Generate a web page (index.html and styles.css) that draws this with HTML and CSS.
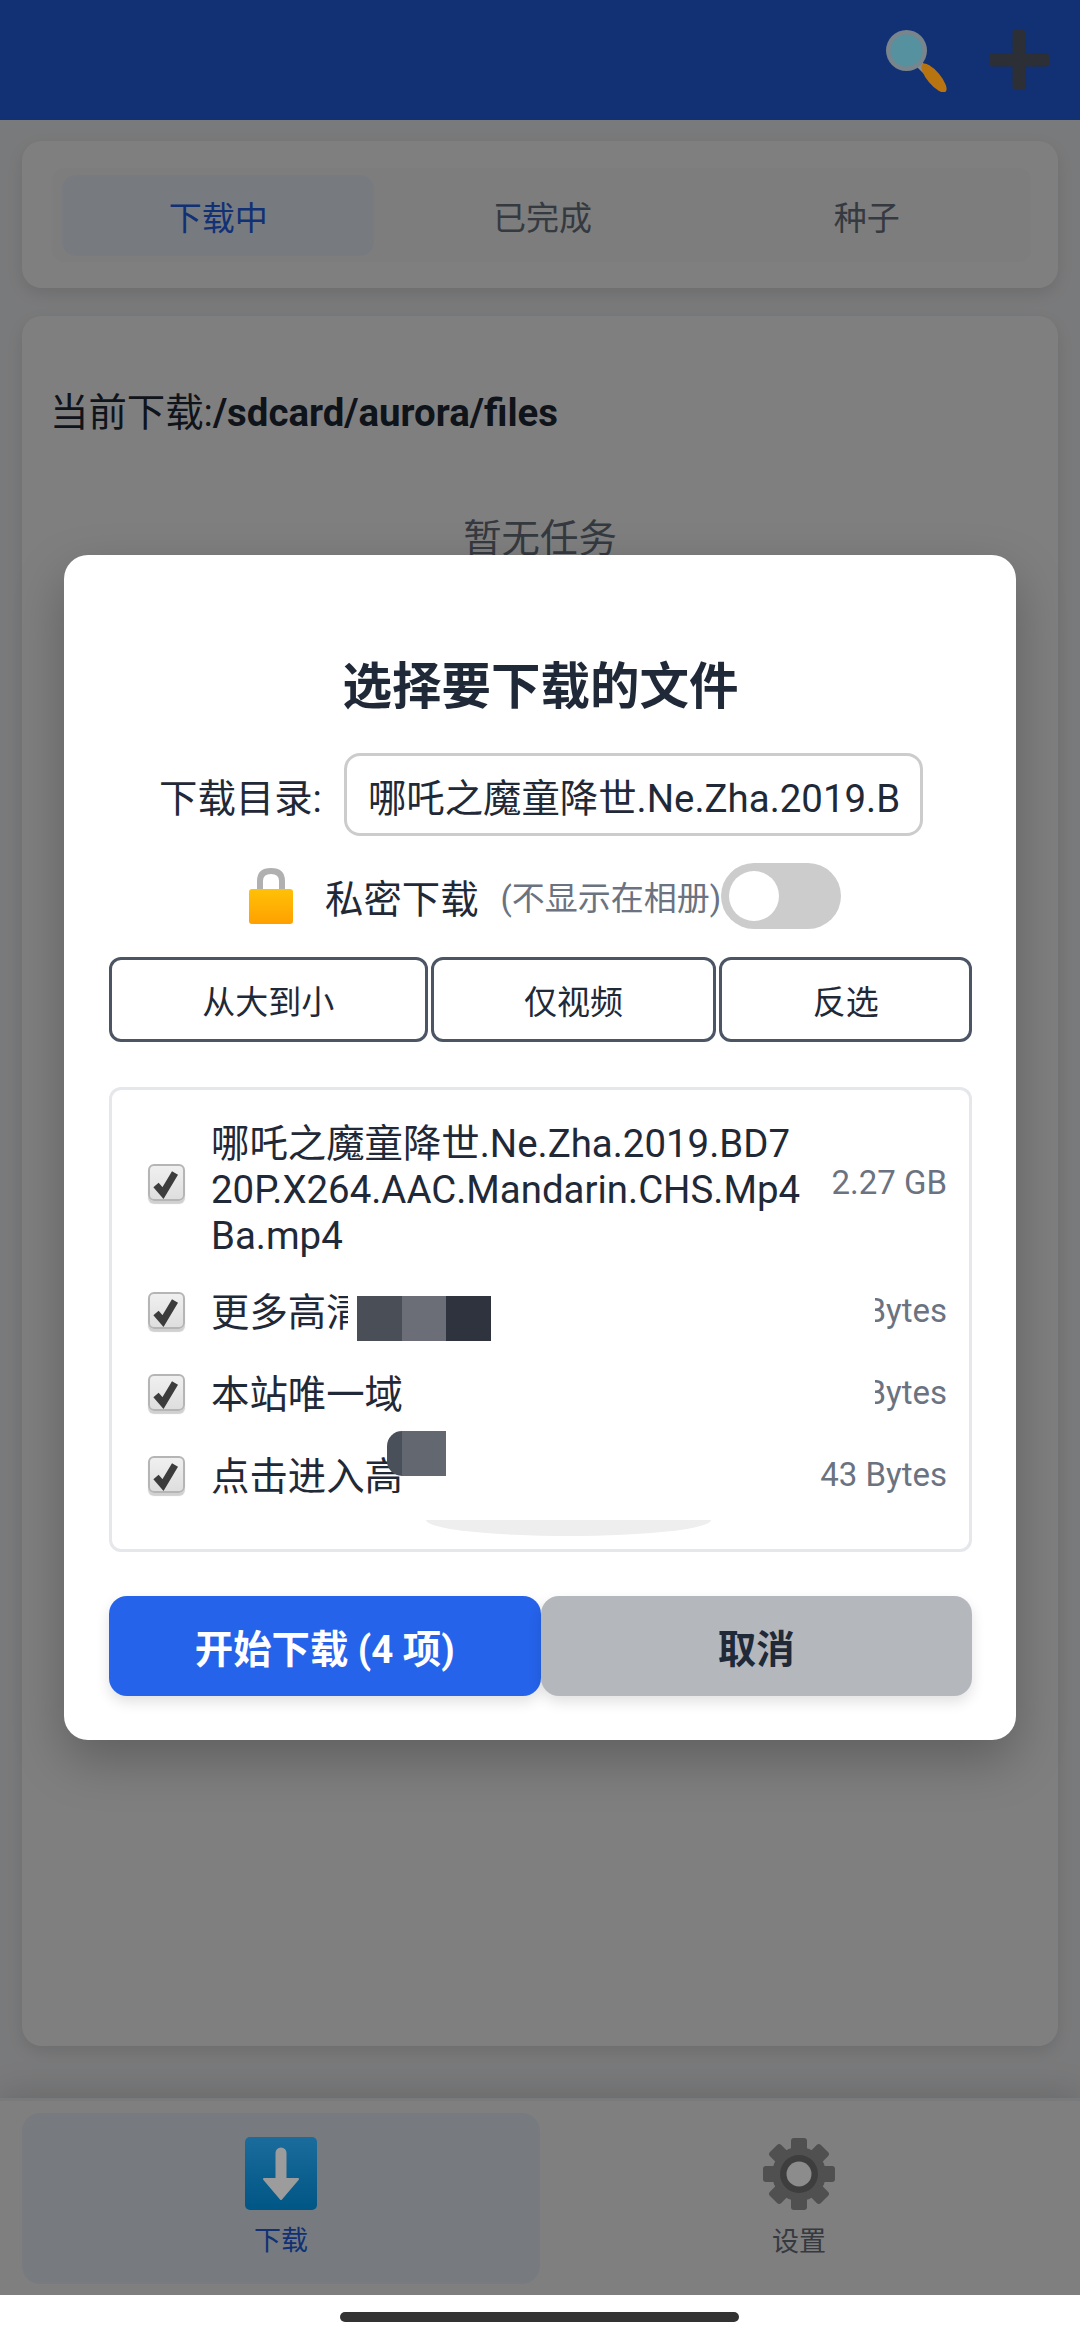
FILE: index.html
```html
<!DOCTYPE html>
<html lang="zh-CN">
<head>
<meta charset="utf-8">
<title>下载</title>
<link rel="stylesheet" href="styles.css">
</head>
<body>
<div class="app">
  <header class="topbar">
    <svg class="raised" viewBox="0 0 62 62" width="62" height="62">
      <path d="M33 34 L41 42" stroke="#8a8d90" stroke-width="7"/>
      <ellipse cx="48" cy="48" rx="18" ry="6.5" transform="rotate(50 48 48)" fill="#b87410"/>
      <circle cx="20.5" cy="20.5" r="20.5" fill="#78858c"/>
      <circle cx="20.5" cy="20.5" r="16" fill="#56919f"/>
    </svg>
    <svg class="raised" viewBox="0 0 60 60" width="60" height="60">
      <path d="M30 4 V56 M4 30 H56" stroke="#2c2f35" stroke-width="13" stroke-linecap="round"/>
    </svg>
  </header>

  <section class="card tabs-card">
    <div class="tabs">
      <div class="tab active">下载中</div>
      <div class="tab">已完成</div>
      <div class="tab">种子</div>
    </div>
  </section>

  <section class="card main-card">
    <div class="path"><span>当前下载:</span><b>/sdcard/aurora/files</b></div>
    <div class="empty">暂无任务</div>
  </section>

  <nav class="bottomnav">
    <div class="navitem active">
      <svg class="raised" viewBox="0 0 72 73" width="72" height="73">
        <defs><linearGradient id="dl" x1="0" y1="0" x2="0" y2="1"><stop offset="0" stop-color="#1a6c9c"/><stop offset="1" stop-color="#005685"/></linearGradient></defs>
        <rect width="72" height="73" rx="5" fill="url(#dl)"/>
        <path d="M36 16 V42" stroke="#9c9c9c" stroke-width="11" stroke-linecap="round"/>
        <path d="M19 42 H53 L36 62 Z" fill="#9c9c9c" stroke="#9c9c9c" stroke-width="2" stroke-linejoin="round"/>
      </svg>
      <span>下载</span>
    </div>
    <div class="navitem">
      <svg class="raised" viewBox="0 0 74 74" width="74" height="74">
        <g fill="#505050">
          <circle cx="37" cy="37" r="27"/>
          <rect x="29" y="1" width="16" height="14" rx="3"/>
          <rect x="29" y="59" width="16" height="14" rx="3"/>
          <rect x="29" y="1" width="16" height="14" rx="3" transform="rotate(45 37 37)"/>
          <rect x="29" y="59" width="16" height="14" rx="3" transform="rotate(45 37 37)"/>
          <rect x="29" y="1" width="16" height="14" rx="3" transform="rotate(90 37 37)"/>
          <rect x="29" y="59" width="16" height="14" rx="3" transform="rotate(90 37 37)"/>
          <rect x="29" y="1" width="16" height="14" rx="3" transform="rotate(135 37 37)"/>
          <rect x="29" y="59" width="16" height="14" rx="3" transform="rotate(135 37 37)"/>
        </g>
        <circle cx="37" cy="37" r="19" fill="#3e3e3e"/>
        <circle cx="37" cy="37" r="12.5" fill="#8c8c8c"/>
      </svg>
      <span>设置</span>
    </div>
  </nav>

  <div class="overlay">
    <div class="dialog">
      <h2 class="title">选择要下载的文件</h2>

      <div class="dir-row">
        <label class="dir-label">下载目录:</label>
        <div class="dir-input"><span>哪吒之魔童降世.Ne.Zha.2019.B</span></div>
      </div>

      <div class="private-row">
        <svg class="ico-lock" viewBox="0 0 44 56" width="44" height="56">
          <defs><linearGradient id="lk" x1="0" y1="0" x2="0" y2="1"><stop offset="0" stop-color="#ffc107"/><stop offset="1" stop-color="#ffa000"/></linearGradient></defs>
          <path d="M11 24 V13 C11 6 15 3 22 3 C29 3 33 6 33 13 V24" fill="none" stroke="#b0b0b0" stroke-width="6"/>
          <rect x="0" y="21" width="44" height="35" rx="3" fill="url(#lk)"/>
        </svg>
        <span class="private-label">私密下载</span>
        <span class="private-hint">(不显示在相册)</span>
        <span class="switch"><span class="knob"></span></span>
      </div>

      <div class="filters">
        <button class="filter">从大到小</button>
        <button class="filter">仅视频</button>
        <button class="filter">反选</button>
      </div>

      <div class="files">
        <div class="file">
          <span class="check"><svg viewBox="0 0 37 37" width="37" height="37"><path d="M8 21 L15 29 L27 9" fill="none" stroke="#3c3c3c" stroke-width="7"/></svg></span>
          <span class="fname long">哪吒之魔童降世.Ne.Zha.2019.BD720P.X264.AAC.Mandarin.CHS.Mp4Ba.mp4</span>
          <span class="fsize">2.27 GB</span>
        </div>
        <div class="file">
          <span class="check"><svg viewBox="0 0 37 37" width="37" height="37"><path d="M8 21 L15 29 L27 9" fill="none" stroke="#3c3c3c" stroke-width="7"/></svg></span>
          <span class="fname">更多高清</span>
          <span class="fsize">43 Bytes</span>
        </div>
        <div class="file">
          <span class="check"><svg viewBox="0 0 37 37" width="37" height="37"><path d="M8 21 L15 29 L27 9" fill="none" stroke="#3c3c3c" stroke-width="7"/></svg></span>
          <span class="fname">本站唯一域</span>
          <span class="fsize">43 Bytes</span>
        </div>
        <div class="file">
          <span class="check"><svg viewBox="0 0 37 37" width="37" height="37"><path d="M8 21 L15 29 L27 9" fill="none" stroke="#3c3c3c" stroke-width="7"/></svg></span>
          <span class="fname">点击进入高</span>
          <span class="fsize">43 Bytes</span>
        </div>
        <div class="mask mask-a"></div>
        <div class="mask mask-b"></div>
        <div class="patch patch-a"><i class="p1"></i><i class="p2"></i><i class="p3"></i></div>
        <div class="patch patch-b"><i class="p4"></i><i class="p5"></i></div>
        <div class="smudge"></div>
      </div>

      <div class="actions">
        <button class="btn primary">开始下载 (4 项)</button>
        <button class="btn cancel">取消</button>
      </div>
    </div>
  </div>
</div>
<div class="homebar"><span class="home-indicator"></span></div>
</body>
</html>
```

FILE: styles.css
```css
* { box-sizing: border-box; }
html, body { margin: 0; padding: 0; }
body {
  width: 1080px;
  height: 2340px;
  overflow: hidden;
  background: #fff;
  font-family: Roboto, "Noto Sans CJK SC", sans-serif;
  color: #1f2937;
}
.app {
  position: relative;
  height: 2295px;
  background: #f3f4f6;
  display: flex;
  flex-direction: column;
  overflow: hidden;
}
.raised { position: relative; z-index: 2; }
.topbar {
  height: 120px;
  flex: none;
  background: #2563eb;
  display: flex;
  align-items: flex-start;
  justify-content: flex-end;
  gap: 41px;
  padding: 30px 31px 0 0;
}
.card {
  background: #fff;
  border-radius: 20px;
  margin: 0 22px;
  box-shadow: 0 6px 16px rgba(0,0,0,.1);
}
.tabs-card {
  flex: none;
  margin-top: 21px;
  height: 147px;
  padding: 27px 27px 0 30px;
}
.tabs {
  display: flex;
  gap: 12px;
  height: 94px;
  padding: 7px 8px 6px 10px;
  background: #fafafa;
  border-radius: 12px;
}
.tab {
  flex: 1;
  display: flex;
  align-items: center;
  justify-content: center;
  font-size: 33px;
  color: #6b7280;
  border-radius: 14px;
}
.tab.active { background: #eff6ff; color: #2563eb; }
.main-card {
  flex: none;
  margin-top: 28px;
  height: 1730px;
  padding: 73px 28px 0;
}
.path {
  font-size: 38.4px;
  line-height: 48px;
  color: #1f2937;
}
.path b { font-weight: 700; }
.empty {
  margin-top: 78px;
  text-align: center;
  font-size: 38.4px;
  line-height: 48px;
  color: #6b7280;
}
.bottomnav {
  flex: none;
  margin-top: auto;
  height: 197px;
  background: #fff;
  border-top: 3px solid #f3f4f6;
  box-shadow: 0 -8px 30px rgba(0,0,0,.12);
  padding: 12px 22px 11px;
  display: flex;
}
.navitem {
  flex: 1;
  display: flex;
  flex-direction: column;
  align-items: center;
  padding-top: 24px;
  font-size: 27px;
  line-height: 36px;
  color: #6b7280;
  border-radius: 18px;
}
.navitem span { margin-top: 13px; }
.navitem.active { background: #eff6ff; color: #2563eb; }
.overlay {
  position: absolute;
  inset: 0;
  z-index: 1;
  background: rgba(0,0,0,.5);
  display: flex;
  align-items: center;
  justify-content: center;
}
.dialog {
  width: 952px;
  background: #fff;
  border-radius: 24px;
  padding: 96px 44px 44px 45px;
  box-shadow: 0 20px 50px rgba(0,0,0,.25);
}
.title {
  margin: 0;
  text-align: center;
  font-size: 49.5px;
  line-height: 72px;
  font-weight: 700;
  color: #1f2937;
}
.dir-row {
  display: flex;
  align-items: center;
  margin: 30px 0 0 50px;
}
.dir-label {
  font-size: 38.4px;
  white-space: nowrap;
  margin-right: 22px;
}
.dir-input {
  width: 579px;
  height: 83px;
  border: 3px solid #ccc;
  border-radius: 16px;
  padding: 0 16px 0 21px;
  display: flex;
  align-items: center;
  overflow: hidden;
  font-size: 38.4px;
  white-space: nowrap;
}
.private-row {
  display: flex;
  align-items: center;
  height: 66px;
  margin-top: 27px;
  padding-left: 140px;
}
.ico-lock { flex: none; margin-right: 32px; }
.private-label { font-size: 38.4px; margin-right: 22px; }
.private-hint { font-size: 33px; color: #6b7280; white-space: nowrap; }
.switch {
  flex: none;
  width: 120px;
  height: 66px;
  border-radius: 33px;
  background: #ccc;
  padding: 8px;
  display: block;
}
.knob {
  display: block;
  width: 50px;
  height: 50px;
  border-radius: 50%;
  background: #fff;
}
.filters {
  display: flex;
  gap: 3px;
  margin-top: 28px;
}
.filter {
  flex: auto;
  height: 85px;
  background: #fff;
  border: 3px solid #4b5563;
  border-radius: 12px;
  font: 33px Roboto, "Noto Sans CJK SC", sans-serif;
  color: #1f2937;
  padding: 0;
}
.files {
  position: relative;
  margin-top: 45px;
  height: 465px;
  border: 3px solid #e5e7eb;
  border-radius: 12px;
  padding: 26px 22px 0 36px;
  display: flex;
  flex-direction: column;
  gap: 36px;
}
.file {
  display: flex;
  align-items: center;
  font-size: 38.4px;
  line-height: 46px;
}
.check {
  flex: none;
  width: 37px;
  height: 37px;
  margin: -5px 26px 0 0;
  background: linear-gradient(#f0f0f0, #dedede);
  border: 2px solid #b5b5b5;
  border-radius: 6px;
  box-shadow: 0 3px 1px #d0d0d0;
  position: relative;
}
.check svg { position: absolute; left: -2px; top: -2px; }
.fname { flex: 1; min-width: 0; word-break: break-all; }
.fname.long { margin: 5px 0 -5px; }
.fsize {
  flex: none;
  margin: -4px 0 0 29px;
  font-size: 33px;
  color: #6b7280;
}
.mask { position: absolute; background: #fff; }
.mask-a { left: 236px; right: 94px; top: 191px; height: 60px; }
.mask-b { left: 290px; right: 94px; top: 273px; height: 60px; }
.patch { position: absolute; display: flex; }
.patch i { display: block; height: 45px; }
.patch-a { left: 245px; top: 206px; }
.patch-b { left: 275px; top: 341px; }
.p1 { width: 45px; background: #4a4f57; }
.p2 { width: 44px; background: #6b6e76; }
.p3 { width: 45px; background: #2e333d; }
.p4 { width: 15px; background: #4a505a; border-radius: 15px 0 0 15px; }
.p5 { width: 44px; background: #636870; }
.smudge {
  position: absolute;
  left: 314px;
  top: 430px;
  width: 285px;
  height: 16px;
  background: #eee;
  border-radius: 0 0 50% 50% / 0 0 100% 100%;
}
.actions {
  display: flex;
  margin-top: 44px;
}
.btn {
  flex: 1;
  height: 100px;
  border: 0;
  border-radius: 18px;
  font: 700 38.4px Roboto, "Noto Sans CJK SC", sans-serif;
  box-shadow: 0 6px 14px rgba(0,0,0,.12);
}
.btn.primary { background: #2563eb; color: #fff; }
.btn.cancel { background: #b4b7bc; color: #1f2937; }
.homebar {
  height: 45px;
  background: #fff;
  display: flex;
  justify-content: center;
  padding-top: 17px;
}
.home-indicator {
  display: block;
  width: 399px;
  height: 10px;
  margin-right: 2px;
  border-radius: 5px;
  background: #333;
}
```
